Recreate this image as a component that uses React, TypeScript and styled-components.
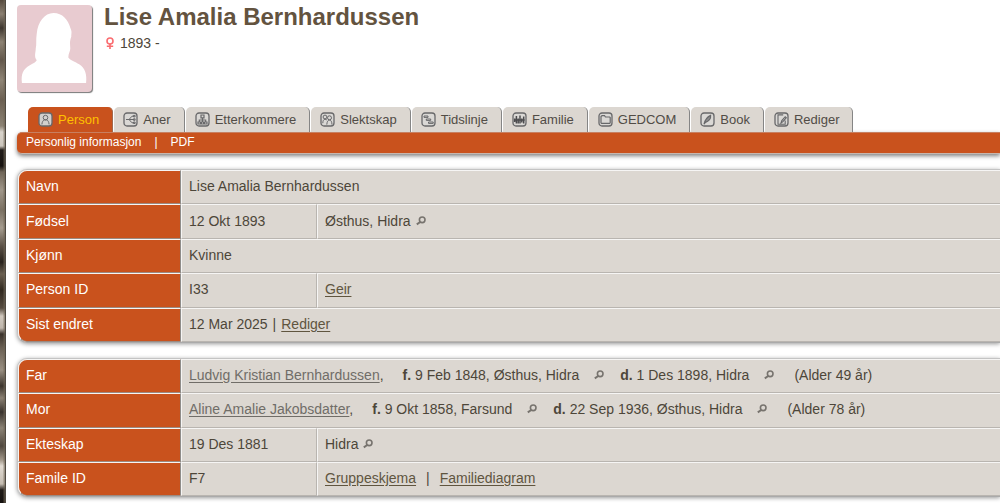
import React from "react";
import styled, { createGlobalStyle } from "styled-components";

const ORANGE = "#c9521d";
const SAND = "#dcd7d1";

const GlobalStyle = createGlobalStyle`
  * { box-sizing: border-box; }
  body {
    margin: 0;
    background: #fff;
    color: #4d4639;
    font-family: "Liberation Sans", Arial, sans-serif;
    font-size: 14px;
    line-height: 20px;
    overflow-x: hidden;
  }
  a { color: inherit; }
`;

const Page = styled.div`
  display: grid;
  grid-template-columns: 6px minmax(0, 1fr);
  min-height: 100vh;
`;

const StoneEdge = styled.div`
  border-right: 1px solid #4f4a42;
  background:
    linear-gradient(90deg, transparent 50%, rgba(110, 100, 84, 0.75)),
    linear-gradient(#55493d 0, #8b8072 14px, #3d362f 28px, #8d8374 42px, #62574b 60px, #8f8576 80px,
      #6b5f52 100px, #8c8374 126px, #d8d3cb 132px, #cbc5bc 146px, #221d1a 150px, #171310 166px,
      #6f6558 172px, #a0978a 190px, #7a7062 210px, #a59c8f 228px, #5b5147 246px, #28221d 262px,
      #6a5f51 274px, #30281f 290px, #554b40 308px, #d0c8be 316px, #bfb6ac 328px, #3a322b 334px,
      #6a6054 348px, #998f82 370px, #3b342d 386px, #8b8174 398px, #38322d 412px, #8b8376 428px,
      #4f473e 446px, #a2988b 460px, #e0dad2 466px, #c4bcb1 484px, #201b18 490px, #15110f 503px);
`;

const Main = styled.main`
  padding: 5px 0 6px 11px;
`;

const Header = styled.header`
  display: flex;
  align-items: flex-start;
  gap: 12px;
  margin-bottom: 15px;
`;

const Portrait = styled.svg`
  flex: none;
  width: 75px;
  height: 87px;
  border-radius: 4px;
  background: #e8cbd0;
  box-shadow: 1px 1px 1px #777;
`;

const Name = styled.h1`
  margin: 0;
  color: #63533f;
  font-size: 24px;
  line-height: 24px;
`;

const Life = styled.p`
  display: flex;
  align-items: center;
  gap: 5px;
  margin: 4px 0 0 1px;
`;

const Tabs = styled.ul`
  display: flex;
  gap: 1px;
  margin: 0;
  padding: 0 0 0 11px;
  list-style: none;
`;

const TabLink = styled.a<{ $active?: boolean }>`
  display: flex;
  align-items: center;
  gap: 5px;
  height: 25px;
  padding: 0 13px 0 ${(p) => (p.$active ? 10 : 9)}px;
  border-right: 1px solid ${(p) => (p.$active ? "#a0694f" : "#858585")};
  border-radius: 5px 5px 0 0;
  background: ${(p) => (p.$active ? ORANGE : SAND)};
  color: ${(p) => (p.$active ? "#ffc000" : "#514c46")};
  font-size: 13px;
  text-decoration: none;
  white-space: nowrap;
`;

const SubMenu = styled.nav`
  display: flex;
  gap: 13px;
  height: 22px;
  margin-bottom: 15px;
  padding-left: 9px;
  border-top: 1px solid #c87f60;
  border-bottom: 1px solid #c6b6ae;
  border-radius: 5px 0 0 5px;
  background: ${ORANGE};
  box-shadow: 0 2px 4px rgba(0, 0, 0, 0.5);
  color: #fff;
  font-size: 12px;
  line-height: 19px;
  a { text-decoration: none; }
`;

const Panel = styled.section`
  margin-bottom: 15px;
  border: 1px solid #c4c4c4;
  border-right: 0;
  border-bottom-color: #aaa;
  border-radius: 10px 0 0 10px;
  background: #fff;
  box-shadow: 0 1px 4px rgba(0, 0, 0, 0.4);
`;

const Table = styled.table<{ $height: number }>`
  width: 100%;
  height: ${(p) => p.$height}px;
  border-collapse: separate;
  border-spacing: 0;
  table-layout: fixed;
  th, td {
    padding: 0 7px 2px;
    border: 1px solid #b9b5b0;
    border-top-color: #f6f5f4;
    border-left-color: #f6f5f4;
    text-align: left;
    white-space: nowrap;
  }
  th {
    border-right-color: #8f8c89;
    border-bottom-color: #9b8a81;
    background: ${ORANGE};
    color: #fff;
    font-weight: normal;
  }
  td { background: ${SAND}; }
  td:last-child { border-right: 0; }
  tr:first-child th { border-top-left-radius: 9px; }
  tr:last-child th { border-bottom-left-radius: 9px; }
`;

const LabelCol = styled.col`
  width: 163px;
`;

const DateCol = styled.col`
  width: 136px;
`;

const Inline = styled.span<{ $gap: number }>`
  display: inline-flex;
  align-items: center;
  gap: ${(p) => p.$gap}px;
`;

const Relative = styled.div`
  display: flex;
  align-items: center;
  gap: 16px;
`;

const RelativeName = styled.span`
  margin-right: 3px;
`;

const Age = styled.span`
  margin-left: 4px;
`;

const TextLink = styled.a<{ $muted?: boolean }>`
  color: ${(p) => (p.$muted ? "#706d68" : "#60553f")};
  text-underline-offset: 2px;
`;

const glyphs: Record<string, React.ReactNode> = {
  person: (
    <>
      <circle cx="7.5" cy="5.6" r="2.3" />
      <path d="M3.9 12.4c.2-2.6 1.2-4 2.3-4.5h2.6c1.1.5 2.1 1.9 2.3 4.5" />
    </>
  ),
  ancestors: <path d="M3 7.5h3M11.5 4.2H9L6 7.5l3 3.3h2.5M6 7.5h5.5M10.5 3.4h1.6v1.5h-1.6zM10.5 6.8h1.6v1.5h-1.6zM10.5 10h1.6v1.5h-1.6z" />,
  descendants: <path strokeWidth="1.2" d="M6 3h3v2.8H6zM7.5 6v2M4.3 10V8h6.4v2M7.5 8v2M3 10h2.5v2H3zM6.4 10h2.2v2H6.4zM9.5 10H12v2H9.5z" />,
  kinship: (
    <>
      <circle cx="5" cy="5" r="1.9" />
      <circle cx="9.5" cy="5.8" r="2" />
      <path d="M2.8 11.2c0-2.4.8-3.8 2.2-4.1l1.8.8M6.8 12.6c.2-3 1.2-4.5 2.7-4.5s2.3 1.5 2.5 4.5" />
    </>
  ),
  timeline: <path d="M3 4h4v1.4H3zM5.3 7h4.4v1.4H5.3zM7.5 10h4.7v1.4H7.5z" />,
  family: (
    <path stroke="#4c4c4e" strokeWidth="1.5" d="M2.7 6.5v3.6M4.4 4v7.5M6.2 6.5v5M8 3.5v8M9.8 6.5v4M11.7 4.5v7M2.2 8h10.6" />
  ),
  gedcom: <path strokeWidth="1.2" d="M3 10.8V4.5l1-.8h2.5l1 1.3h4.2l.5.5v5.3l-.5.5H3.5z" />,
  book: <path strokeWidth="1.2" fill="#8d8d8e" d="M4 12.2c.8-3.6 2.6-6.8 6.6-8.8.3 2.6-1.6 5.6-5.2 7z" />,
  edit: <path strokeWidth="1.1" d="M9.2 2.9H4v9.3h7.2V8.5M7 11l.8-2.4 3.4-3.9 1.1 1-3.4 4z" />,
};

const TabIcon = ({ name }: { name: string }) => (
  <svg width="15" height="15" viewBox="0 0 15 15" fill="none" stroke="#68686a" strokeWidth="1" aria-hidden="true">
    <rect x="1" y="1" width="13" height="13" rx="3" fill={name === "person" ? "#d2d0ce" : "#dad8d5"} strokeWidth="1.3" />
    {glyphs[name]}
  </svg>
);

const Search = () => (
  <svg width="10" height="10" viewBox="0 0 10 10" fill="none" stroke="#77736e" aria-hidden="true">
    <circle cx="6.2" cy="3.8" r="2.8" strokeWidth="1.6" />
    <path d="M4.2 6 .8 8.4" strokeWidth="2" />
  </svg>
);

const tabs = [
  ["person", "Person"],
  ["ancestors", "Aner"],
  ["descendants", "Etterkommere"],
  ["kinship", "Slektskap"],
  ["timeline", "Tidslinje"],
  ["family", "Familie"],
  ["gedcom", "GEDCOM"],
  ["book", "Book"],
  ["edit", "Rediger"],
];

const Columns = () => (
  <colgroup>
    <LabelCol />
    <DateCol />
    <col />
  </colgroup>
);

const Place = ({ children }: { children: React.ReactNode }) => (
  <Inline $gap={5}>
    {children}
    <Search />
  </Inline>
);

type ParentProps = { label: string; name: string; born: string; died: string; age: string };

const ParentRow = ({ label, name, born, died, age }: ParentProps) => (
  <tr>
    <th scope="row">{label}</th>
    <td colSpan={2}>
      <Relative>
        <RelativeName>
          <TextLink $muted href="#person">{name}</TextLink>,
        </RelativeName>
        <Inline $gap={15}>
          <span><b>f.</b> {born}</span>
          <Search />
        </Inline>
        <Inline $gap={15}>
          <span><b>d.</b> {died}</span>
          <Search />
        </Inline>
        <Age>({age})</Age>
      </Relative>
    </td>
  </tr>
);

export default function App() {
  return (
    <>
      <GlobalStyle />
      <Page>
        <StoneEdge />
        <Main>
          <Header>
            <Portrait viewBox="0 0 76 88" role="img" aria-label="Lise Amalia Bernhardussen">
              <path
                fill="#fff"
                d="M5 79C4 70 6 65 13 61c4-2 6-3 7-5-3-4-1-8-1-12 1-4 0-9 1-15C21 17 28 8 37 8c9 0 15 7 17 15 2 4 1 6 1 9-2 5-1 8-1 12 0 3-2 5-2 9 2 3 7 4 11 7 6 4 8 10 7 19Z"
              />
            </Portrait>
            <div>
              <Name>Lise Amalia Bernhardussen</Name>
              <Life>
                <svg width="10" height="12" viewBox="0 0 10 12" fill="none" stroke="#fa6c70" strokeWidth="1.6" role="img" aria-label="Kvinne">
                  <circle cx="5" cy="4" r="3" />
                  <path d="M5 7v5M1.8 9.2h6.4" />
                </svg>
                1893 -
              </Life>
            </div>
          </Header>

          <nav>
            <Tabs>
              {tabs.map(([icon, label]) => (
                <li key={icon}>
                  <TabLink href={`#${icon}`} $active={icon === "person"}>
                    <TabIcon name={icon} />
                    {label}
                  </TabLink>
                </li>
              ))}
            </Tabs>
          </nav>
          <SubMenu>
            <a href="#info">Personlig informasjon</a>
            <span>|</span>
            <a href="#pdf">PDF</a>
          </SubMenu>

          <Panel>
            <Table $height={172}>
              <Columns />
              <tbody>
                <tr>
                  <th scope="row">Navn</th>
                  <td colSpan={2}>Lise Amalia Bernhardussen</td>
                </tr>
                <tr>
                  <th scope="row">Fødsel</th>
                  <td>12 Okt 1893</td>
                  <td><Place>Østhus, Hidra</Place></td>
                </tr>
                <tr>
                  <th scope="row">Kjønn</th>
                  <td colSpan={2}>Kvinne</td>
                </tr>
                <tr>
                  <th scope="row">Person ID</th>
                  <td>I33</td>
                  <td><TextLink href="#geir">Geir</TextLink></td>
                </tr>
                <tr>
                  <th scope="row">Sist endret</th>
                  <td colSpan={2}>
                    <Inline $gap={5}>
                      12 Mar 2025 <span>|</span> <TextLink href="#edit">Rediger</TextLink>
                    </Inline>
                  </td>
                </tr>
              </tbody>
            </Table>
          </Panel>

          <Panel>
            <Table $height={137}>
              <Columns />
              <tbody>
                <ParentRow
                  label="Far"
                  name="Ludvig Kristian Bernhardussen"
                  born="9 Feb 1848, Østhus, Hidra"
                  died="1 Des 1898, Hidra"
                  age="Alder 49 år"
                />
                <ParentRow
                  label="Mor"
                  name="Aline Amalie Jakobsdatter"
                  born="9 Okt 1858, Farsund"
                  died="22 Sep 1936, Østhus, Hidra"
                  age="Alder 78 år"
                />
                <tr>
                  <th scope="row">Ekteskap</th>
                  <td>19 Des 1881</td>
                  <td><Place>Hidra</Place></td>
                </tr>
                <tr>
                  <th scope="row">Famile ID</th>
                  <td>F7</td>
                  <td>
                    <Inline $gap={10}>
                      <TextLink href="#group">Gruppeskjema</TextLink>
                      <span>|</span>
                      <TextLink href="#chart">Familiediagram</TextLink>
                    </Inline>
                  </td>
                </tr>
              </tbody>
            </Table>
          </Panel>
        </Main>
      </Page>
    </>
  );
}
